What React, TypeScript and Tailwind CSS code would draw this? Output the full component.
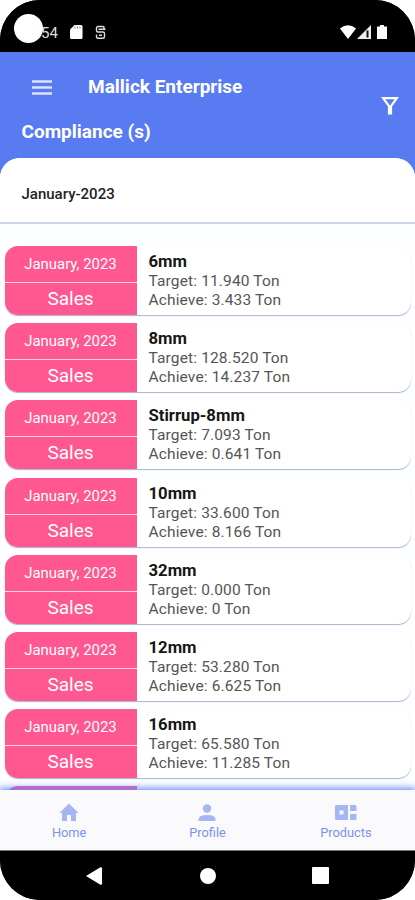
import React from "react";

const items = [
  { name: "6mm", target: "11.940 Ton", achieve: "3.433 Ton" },
  { name: "8mm", target: "128.520 Ton", achieve: "14.237 Ton" },
  { name: "Stirrup-8mm", target: "7.093 Ton", achieve: "0.641 Ton" },
  { name: "10mm", target: "33.600 Ton", achieve: "8.166 Ton" },
  { name: "32mm", target: "0.000 Ton", achieve: "0 Ton" },
  { name: "12mm", target: "53.280 Ton", achieve: "6.625 Ton" },
  { name: "16mm", target: "65.580 Ton", achieve: "11.285 Ton" },
];

function StatusBar() {
  return (
    <div className="flex h-[52px] shrink-0 items-start bg-black pl-[14px] pr-[28px] pt-[14px] text-white">
      <div className="relative z-10 h-[29px] w-[29px] rounded-full bg-white" />
      <span className="-ml-[2px] mt-[10px] text-[15px] leading-[18px] text-[#dedede]">54</span>
      <svg className="ml-[12px] mt-[11px] h-[14px] w-[13px]" viewBox="0 0 13 14">
        <path d="M4.500 0H11Q12.500 0 12.500 1.500V12.500Q12.500 14 11 14H1.500Q0 14 0 12.500V4.500Z" fill="#fff" />
        <path d="M5 1.500v2M7.500 1.500v2M10 1.500v2" stroke="#777" />
      </svg>
      <svg className="ml-[12px] mt-[11px] h-[15px] w-[11px]" viewBox="0 0 11 15" fill="none" stroke="#dcdcdc" strokeWidth="1.400">
        <path d="M9 4.500V2.500Q9 1.500 8 1.500H3Q1.500 1.500 1.500 3V5.500Q1.500 7 3 7H8Q9.500 7 9.500 8.500V11.500Q9.500 13.300 8 13.300H3Q1.500 13.300 1.500 11.500V9.500M3.500 4.200H10.500M4 10.300H7" />
      </svg>
      <div className="grow" />
      <svg className="mt-[11px] h-[14px] w-[16px]" viewBox="0 0 16 14">
        <path d="M0 3.500Q8-3 16 3.500L8 14Z" fill="#fff" />
      </svg>
      <svg className="ml-[1px] mt-[11px] h-[14px] w-[14px]" viewBox="0 0 14 14">
        <path d="M0 14L14 0V14Z" fill="#eee" />
        <path d="M10.500 5.500V12.500" stroke="#111" strokeWidth="2" />
      </svg>
      <svg className="ml-[6px] mt-[11px] h-[14px] w-[10px]" viewBox="0 0 10 14">
        <path d="M3 0H7V1.500H10V14H0V1.500H3Z" fill="#fff" />
      </svg>
    </div>
  );
}

function Header() {
  return (
    <div className="flex h-[106px] shrink-0 justify-between pl-[21.500px] pr-[16px] text-white">
      <div>
        <div className="flex h-[70px] items-center">
          <svg className="ml-[10.500px] h-[15px] w-[20px]" viewBox="0 0 20 15" stroke="#dce3fd" strokeWidth="2.600">
            <path d="M0 1.500H20M0 7.500H20M0 13.500H20" />
          </svg>
          <h1 className="ml-[36px] text-[19px] font-bold leading-6">Mallick Enterprise</h1>
        </div>
        <h2 className="-mt-[2px] text-[19px] font-bold leading-6">Compliance (s)</h2>
      </div>
      <svg className="mt-[45px] h-[18px] w-[18px]" viewBox="0 0 18 18" fill="none" stroke="#fff" strokeWidth="2.200">
        <path d="M2.200 1.200H15.800L10 9V16.500H8V9Z" />
      </svg>
    </div>
  );
}

function Card({ name, target, achieve }: { name: string; target: string; achieve: string }) {
  return (
    <div className="flex h-[69px] shrink-0 overflow-hidden rounded-[13px] bg-white shadow-[0_1px_1px_#a8b3ce]">
      <div className="flex w-[132px] flex-col bg-[#ff5790] text-center text-white">
        <div className="h-[37px] border-b border-[#ffd3e1] text-[14.900px] leading-[36px]">January, 2023</div>
        <div className="text-[19px] leading-[32px]">Sales</div>
      </div>
      <div className="pl-[12px] pt-[5px] text-[15.500px] leading-[19px] tracking-[0.140px] text-[#555]">
        <div className="text-[16.700px] font-bold leading-[21px] tracking-normal text-[#161616]">{name}</div>
        <div>Target: {target}</div>
        <div>Achieve: {achieve}</div>
      </div>
    </div>
  );
}

function BottomTabs() {
  return (
    <div className="relative flex h-[60px] shrink-0 bg-[#fafafc] text-[12.800px] leading-[16px] text-[#7b92ed] shadow-[0_-1px_7px_1px_#718df5]">
      <div className="flex flex-1 flex-col items-center pt-[13px]">
        <svg className="h-[19px] w-[20px]" viewBox="0 0 20 19" fill="#a5b6f5">
          <path d="M10 .5L19.500 10H17V18H12V12H8V18H3V10H.5Z" />
        </svg>
        <span className="mt-[3px]">Home</span>
      </div>
      <div className="flex flex-1 flex-col items-center pt-[13px]">
        <svg className="h-[19px] w-[18px]" viewBox="0 0 18 19" fill="#a5b6f5">
          <circle cx="9" cy="5.500" r="4.200" />
          <path d="M.5 18V16Q1 12 9 12T17.500 16V18Z" />
        </svg>
        <span className="mt-[3px]">Profile</span>
      </div>
      <div className="flex flex-1 flex-col items-center pt-[13px]">
        <svg className="h-[19px] w-[22px]" viewBox="0 0 22 19" fill="#a5b6f5">
          <path fillRule="evenodd" d="M1.500 2H13V17H1.500Q0 17 0 15.500V3.500Q0 2 1.500 2ZM4.500 7.500V11.500H8.500V7.500Z" />
          <path d="M15 2H20Q21.500 2 21.500 3.500V8H15ZM15 11H21.500V15.500Q21.500 17 20 17H15Z" />
        </svg>
        <span className="mt-[3px]">Products</span>
      </div>
    </div>
  );
}

export default function App() {
  return (
    <div className="h-[900px] w-[415px] bg-white font-['Roboto',sans-serif]">
      <div className="flex h-[900px] flex-col overflow-hidden rounded-[40px] bg-black">
        <StatusBar />
        <div className="flex h-[738px] shrink-0 flex-col overflow-hidden bg-[#587bf2]">
          <Header />
          <div className="flex grow flex-col overflow-hidden rounded-t-[20px] bg-[#fdfeff]">
            <div className="h-[66px] shrink-0 border-b-2 border-[#ccd3ee] bg-white pl-[21.500px] text-[15px] font-medium leading-[72px] text-[#222]">
              January-2023
            </div>
            <div className="flex flex-col gap-[8.200px] px-[4.500px] pt-[22px]">
              {items.map((item) => (
                <Card key={item.name} {...item} />
              ))}
              <div className="h-[69px] w-[132px] rounded-l-[13px] bg-[#f0509a]" />
            </div>
          </div>
        </div>
        <BottomTabs />
        <div className="relative flex h-[50px] shrink-0 items-center border-t border-[#777] bg-black">
          <svg className="ml-[86px] h-[18px] w-[16px]" viewBox="0 0 16 18">
            <path d="M0 9L14 .5Q16 0 16 1V17Q16 18 14 17.500Z" fill="#fff" />
          </svg>
          <div className="ml-[98px] h-[16px] w-[16px] rounded-full bg-white" />
          <div className="ml-[96px] h-[17px] w-[17px] rounded-[1px] bg-white" />
        </div>
      </div>
    </div>
  );
}
